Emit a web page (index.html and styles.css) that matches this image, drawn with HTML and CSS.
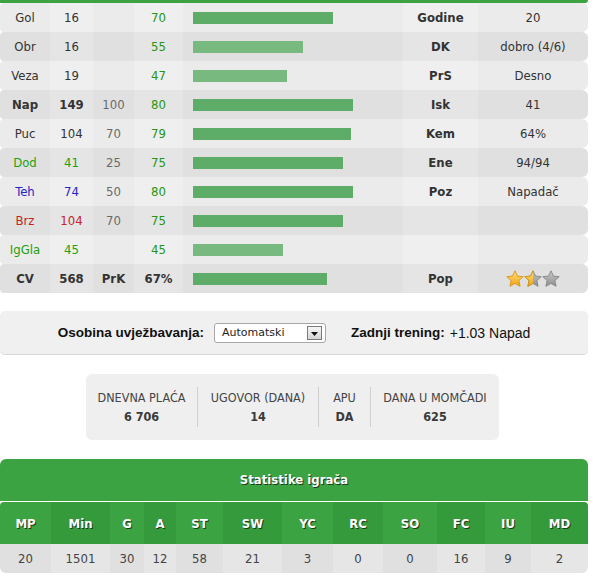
FILE: index.html
```html
<!DOCTYPE html>
<html>
	<head>
		<meta charset="UTF-8">
		<title>Igrač</title>
		<link rel="stylesheet" href="styles.css">
	</head>
	<body>
		<div class="page">
			<div class="topline"></div>
			<table class="skills">
				<colgroup>
					<col style="width:50px"><col style="width:43px"><col style="width:41px"><col style="width:49px">
					<col style="width:220px"><col style="width:75px"><col style="width:110px">
				</colgroup>
				<tr><td>Gol</td><td>16</td><td class="pr"></td><td class="pot">70</td><td><div class="bar" style="width:140px"></div></td><td class="key">Godine</td><td>20</td></tr>
				<tr><td>Obr</td><td>16</td><td class="pr"></td><td class="pot">55</td><td><div class="bar low" style="width:110px"></div></td><td class="key">DK</td><td>dobro (4/6)</td></tr>
				<tr><td>Veza</td><td>19</td><td class="pr"></td><td class="pot">47</td><td><div class="bar low" style="width:94px"></div></td><td class="key">PrS</td><td>Desno</td></tr>
				<tr><td class="key">Nap</td><td class="key">149</td><td class="pr">100</td><td class="pot">80</td><td><div class="bar" style="width:160px"></div></td><td class="key">Isk</td><td>41</td></tr>
				<tr><td>Puc</td><td>104</td><td class="pr">70</td><td class="pot">79</td><td><div class="bar" style="width:158px"></div></td><td class="key">Kem</td><td>64%</td></tr>
				<tr><td class="grn">Dod</td><td class="grn">41</td><td class="pr">25</td><td class="pot">75</td><td><div class="bar" style="width:150px"></div></td><td class="key">Ene</td><td>94/94</td></tr>
				<tr><td class="blu">Teh</td><td class="blu">74</td><td class="pr">50</td><td class="pot">80</td><td><div class="bar" style="width:160px"></div></td><td class="key">Poz</td><td>Napadač</td></tr>
				<tr><td class="red">Brz</td><td class="red">104</td><td class="pr">70</td><td class="pot">75</td><td><div class="bar" style="width:150px"></div></td><td></td><td></td></tr>
				<tr><td class="grn">IgGla</td><td class="grn">45</td><td class="pr"></td><td class="pot">45</td><td><div class="bar low" style="width:90px"></div></td><td></td><td></td></tr>
				<tr><td class="key">CV</td><td class="key">568</td><td class="key">PrK</td><td class="key">67%</td><td><div class="bar" style="width:134px"></div></td><td class="key">Pop</td>
					<td>
						<svg class="stars" width="54" height="18" viewBox="0 0 54 18">
							<defs>
								<linearGradient id="gold" x1="0" y1="0" x2="0" y2="1">
									<stop offset="0" stop-color="#ffe07a"/>
									<stop offset="1" stop-color="#f0a416"/>
								</linearGradient>
								<linearGradient id="grey" x1="0" y1="0" x2="0" y2="1">
									<stop offset="0" stop-color="#c8c8c8"/>
									<stop offset="1" stop-color="#909090"/>
								</linearGradient>
								<clipPath id="half"><rect x="0" y="0" width="9" height="18"/></clipPath>
								<polygon id="st" points="9,0.8 11.5,6.1 17.2,6.7 12.9,10.5 14.1,16.3 9,13.4 3.9,16.3 5.1,10.5 0.8,6.7 6.5,6.1" stroke-linejoin="round"/>
							</defs>
							<use href="#st" x="0" fill="url(#gold)" stroke="#d99512" stroke-width="0.9"/>
							<use href="#st" x="18" fill="url(#grey)" stroke="#858585" stroke-width="0.9"/>
							<g transform="translate(18,0)" clip-path="url(#half)">
								<use href="#st" fill="url(#gold)" stroke="#d99512" stroke-width="0.9"/>
							</g>
							<use href="#st" x="36" fill="url(#grey)" stroke="#858585" stroke-width="0.9"/>
						</svg>
					</td>
				</tr>
			</table>

			<div class="train">
				<b>Osobina uvježbavanja:</b>
				<div class="select">
					<span class="txt">Automatski</span>
					<span class="arrow"><svg width="7" height="4" viewBox="0 0 7 4"><polygon points="0,0 7,0 3.5,4" fill="#111"/></svg></span>
				</div>
				<b>Zadnji trening:</b><span class="last">+1.03 Napad</span>
			</div>

			<div class="contract">
				<div class="cell c1"><p>DNEVNA PLAĆA</p><p class="val">6 706</p></div>
				<div class="cell c2"><p>UGOVOR (DANA)</p><p class="val">14</p></div>
				<div class="cell c3"><p>APU</p><p class="val">DA</p></div>
				<div class="cell c4"><p>DANA U MOMČADI</p><p class="val">625</p></div>
			</div>

			<div class="stats">
				<div class="stats_title">Statistike igrača</div>
				<table class="stats_table">
					<colgroup>
						<col style="width:51px"><col style="width:59px"><col style="width:34px"><col style="width:32px">
						<col style="width:47px"><col style="width:59px"><col style="width:51px"><col style="width:50px">
						<col style="width:54px"><col style="width:48px"><col style="width:46px"><col style="width:57px">
					</colgroup>
					<tr class="head">
						<th>MP</th><th>Min</th><th>G</th><th>A</th><th>ST</th><th>SW</th><th>YC</th><th>RC</th><th>SO</th><th>FC</th><th>IU</th><th>MD</th>
					</tr>
					<tr class="data">
						<td>20</td><td>1501</td><td>30</td><td>12</td><td>58</td><td>21</td><td>3</td><td>0</td><td>0</td><td>16</td><td>9</td><td>2</td>
					</tr>
				</table>
			</div>
		</div>
	</body>
</html>
```

FILE: styles.css
```css
*{
	padding: 0;
	margin: 0;
}
body{
	font-family: "DejaVu Sans Condensed", "DejaVu Sans", sans-serif;
	font-size: 13px;
	color: #333;
	background: #fff;
}
.page{
	width: 588px;
}
.topline{
	height: 3px;
	background: #3ca342;
	border-radius: 0 0 4px 0;
}
.skills{
	width: 588px;
	border-collapse: separate;
	border-spacing: 0;
	table-layout: fixed;
}
.skills td{
	height: 29px;
	text-align: center;
	background: #ebebeb;
}
.skills td:nth-child(even){
	background: #efefef;
}
.skills tr:nth-child(even) td{
	background: #e0e0e0;
}
.skills tr:nth-child(even) td:nth-child(even){
	background: #e5e5e5;
}
.skills td:first-child{
	border-radius: 4px 0 0 4px;
}
.skills td:last-child{
	border-radius: 0 6px 6px 0;
}
.skills .key{
	font-weight: bold;
}
.skills .pr{
	color: #6a6a6a;
}
.skills .pot{
	color: #27950f;
}
.skills .grn{
	color: #1ea010;
}
.skills .blu{
	color: #2424c4;
}
.skills .red{
	color: #c42424;
}
.bar{
	height: 12px;
	margin-left: 10px;
	background: #5dad68;
}
.bar.low{
	background: #77b97f;
}
.stars{
	display: block;
	margin: 0 auto;
}
.train{
	margin-top: 18px;
	height: 43px;
	border-bottom: 1px solid #d6d6d6;
	border-radius: 5px;
	background: #f0f0f0;
	display: flex;
	align-items: center;
	justify-content: center;
	font-family: "Liberation Sans", Arial, sans-serif;
	font-size: 13.5px;
	color: #111;
}
.train .last{
	margin-left: 5px;
	font-size: 14px;
}
.select{
	width: 112px;
	height: 20px;
	box-sizing: border-box;
	margin: 0 25px 0 10px;
	border: 1px solid #a8a8a8;
	border-radius: 3px;
	background: #fff;
	display: flex;
	align-items: center;
	font-family: "DejaVu Sans", sans-serif;
	font-size: 11px;
	color: #222;
}
.select .txt{
	flex: 1;
	padding-left: 7px;
}
.select .arrow{
	width: 15px;
	height: 14px;
	box-sizing: border-box;
	margin-right: 3px;
	border: 1px solid #7a7a7a;
	background: linear-gradient(#f6f6f6, #d4d4d4);
	display: flex;
	align-items: flex-end;
	justify-content: center;
	padding-bottom: 3px;
}
.contract{
	width: 413px;
	margin: 19px 0 0 86px;
	padding: 13px 0;
	border-radius: 6px;
	background: #efefef;
	display: flex;
	font-family: "Liberation Sans Narrow", "DejaVu Sans Condensed", sans-serif;
	font-size: 12.5px;
	color: #444;
}
.contract .cell{
	box-sizing: border-box;
	padding: 1px 0;
	text-align: center;
	line-height: 19px;
}
.contract .cell + .cell{
	border-left: 1px solid #cfcfcf;
}
.contract .c1{ width: 111px; }
.contract .c2{ width: 121px; }
.contract .c3{ width: 52px; }
.contract .c4{ width: 129px; }
.contract .val{
	font-weight: bold;
	color: #3a3a3a;
}
.stats{
	margin-top: 19px;
}
.stats_title{
	height: 42px;
	line-height: 42px;
	margin-bottom: 1px;
	border-radius: 6px 6px 0 0;
	background: #3ca342;
	color: #fff;
	font-weight: bold;
	text-align: center;
	text-shadow: 1px 1px 0 #1c3a1c;
}
.stats_table{
	width: 588px;
	border-collapse: separate;
	border-spacing: 0;
	table-layout: fixed;
}
.stats_table th{
	height: 42px;
	background: #3ca342;
	color: #fff;
	font-weight: bold;
	text-shadow: 1px 1px 0 #1c3a1c;
}
.stats_table th:nth-child(even){
	background: #349a3b;
}
.stats_table th:first-child{
	border-radius: 4px 0 0 0;
}
.stats_table th:last-child{
	border-radius: 0 4px 0 0;
}
.stats_table td{
	height: 29px;
	text-align: center;
	color: #444;
	background: #e0e0e0;
}
.stats_table td:nth-child(even){
	background: #e6e6e6;
}
.stats_table td:first-child{
	border-radius: 0 0 0 6px;
}
.stats_table td:last-child{
	border-radius: 0 0 6px 0;
}
```
